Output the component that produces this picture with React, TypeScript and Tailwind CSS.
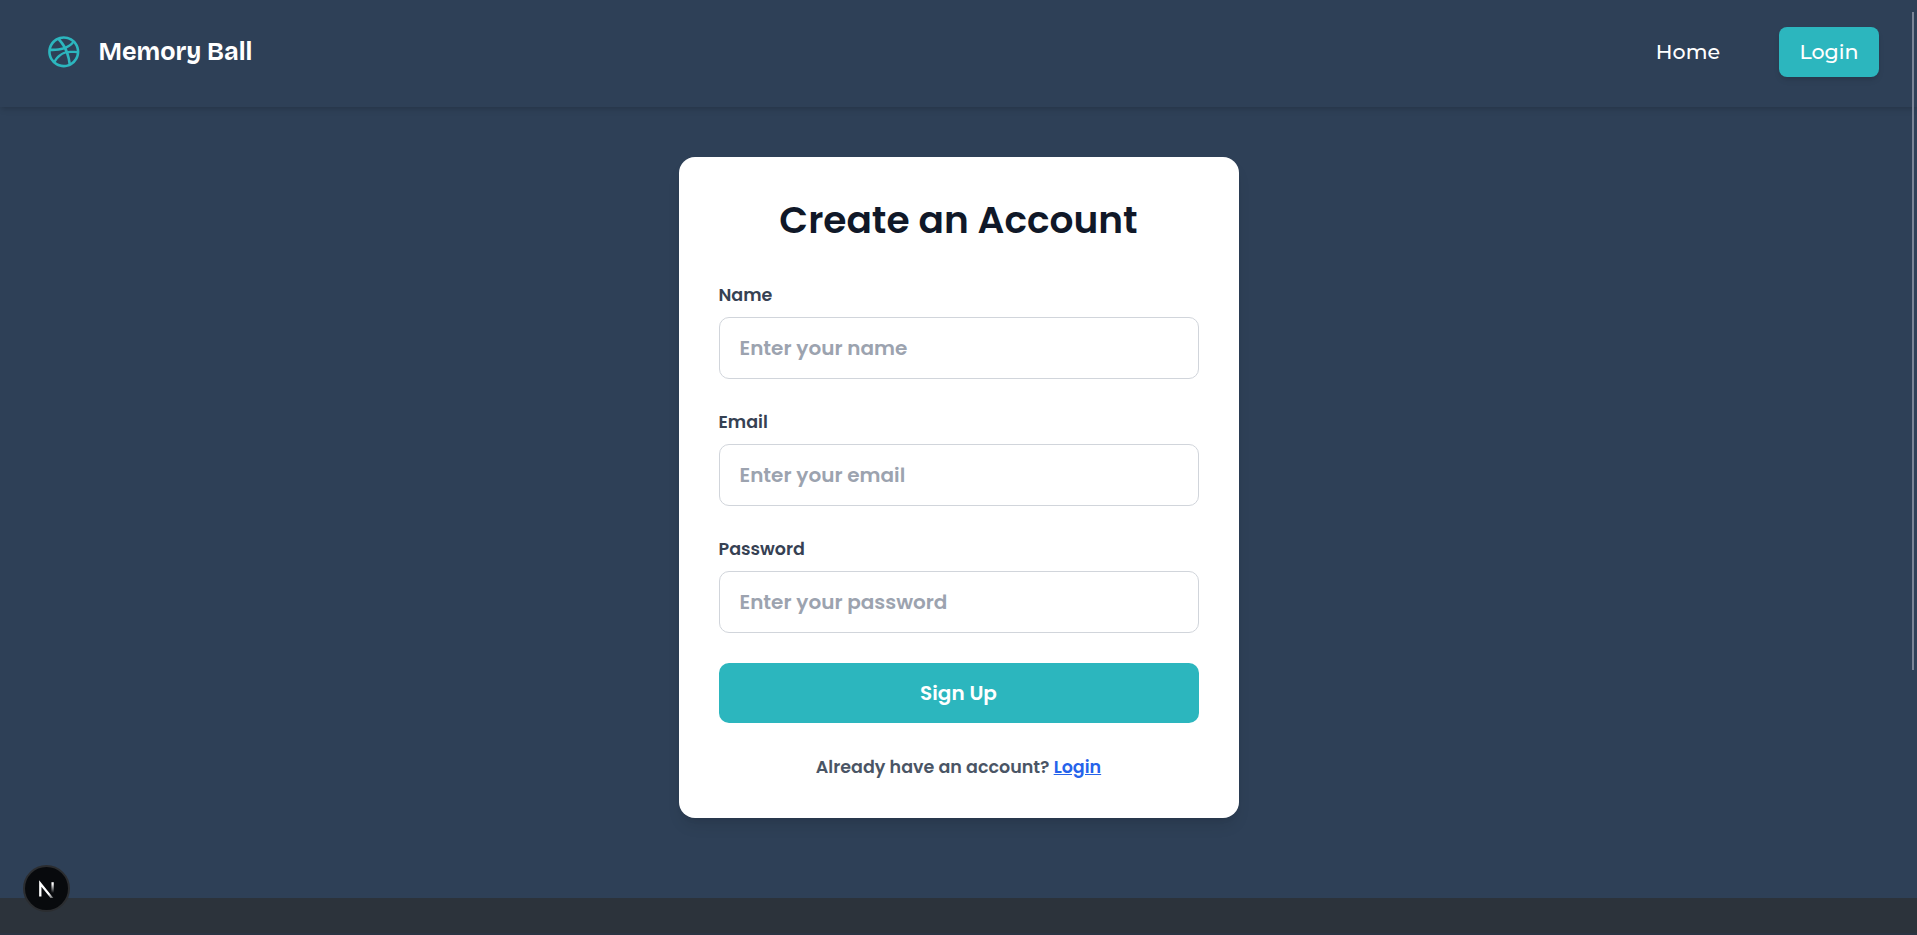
import { BiLogoDribbble } from "react-icons/bi";

type FieldProps = { id: string; label: string; type: string; placeholder: string };

function Navbar() {
  return (
    <header className="relative flex h-[107px] shrink-0 items-start justify-between pt-[27px] pr-[38px] pl-[45px] shadow-md">
      <div className="flex h-[50px] items-center gap-4">
        <BiLogoDribbble className="size-[37.5px] text-[#2cb6be]" />
        <span className="font-['Bricolage_Grotesque','Inter',sans-serif] text-[25px] leading-[35px] font-bold text-white">Memory Ball</span>
      </div>
      <nav className="flex items-center gap-[59px] font-['Montserrat','Inter',sans-serif] text-[20.6px] font-medium text-white">
        <a href="#home">Home</a>
        <a href="#login" className="flex h-[50px] w-[100px] items-center justify-center rounded-lg bg-[#2cb6be] shadow-md">Login</a>
      </nav>
    </header>
  );
}

function Field({ id, label, type, placeholder }: FieldProps) {
  return (
    <div className="flex h-[127px] flex-col">
      <label htmlFor={id} className="mb-2 h-[27px] text-[17.5px] leading-[27px] font-semibold text-gray-700">{label}</label>
      <input id={id} type={type} placeholder={placeholder} className="h-[62px] w-full rounded-[10px] border border-[#d1d5db] px-5 text-xl font-semibold outline-none placeholder:text-[#9ca3af]" />
    </div>
  );
}

function SignUpCard() {
  return (
    <form className="flex h-[661px] w-[560px] flex-col rounded-2xl bg-white px-10 pt-10 font-['Poppins','Inter',sans-serif] shadow-lg">
      <h1 className="mb-[45px] h-10 text-center text-[37.5px] leading-[46px] font-semibold text-gray-900">Create an Account</h1>
      <Field id="name" label="Name" type="text" placeholder="Enter your name" />
      <Field id="email" label="Email" type="email" placeholder="Enter your email" />
      <Field id="password" label="Password" type="password" placeholder="Enter your password" />
      <button type="button" className="h-[60px] w-full rounded-[10px] bg-[#2cb6be] text-xl font-semibold text-white">Sign Up</button>
      <p className="mt-[31px] text-center text-[17.5px] leading-[27px] font-semibold text-gray-600">
        Already have an account? <a href="#login" className="text-[#2563eb] underline">Login</a>
      </p>
    </form>
  );
}

function DevBadge() {
  return (
    <div className="absolute bottom-[23px] left-[23px] flex size-[47px] items-center justify-center rounded-full border-2 border-[#2b2d30] bg-[#080a0d]">
      <svg viewBox="0 0 18 18" className="size-[18px]" fill="none">
        <defs>
          <linearGradient id="stem" x1="0" y1="4" x2="0" y2="13" gradientUnits="userSpaceOnUse">
            <stop stopColor="white" />
            <stop offset="1" stopColor="white" stopOpacity="0" />
          </linearGradient>
          <linearGradient id="diagonal" x1="12" y1="13" x2="16" y2="18.5" gradientUnits="userSpaceOnUse">
            <stop stopColor="white" />
            <stop offset="1" stopColor="white" stopOpacity="0.2" />
          </linearGradient>
        </defs>
        <path d="M2.3 16.5V3.5L14.5 18.6" stroke="url(#diagonal)" strokeWidth="2.3" />
        <path d="M14.6 2.2V13" stroke="url(#stem)" strokeWidth="2.3" />
      </svg>
    </div>
  );
}

export default function App() {
  return (
    <div className="relative flex h-[935px] w-full flex-col overflow-hidden bg-[#2e4057]">
      <Navbar />
      <main className="flex h-[791px] shrink-0 items-start justify-center pt-[50px]">
        <SignUpCard />
      </main>
      <footer className="h-[37px] border-b-2 border-[#2b3442] bg-[#2c333b]" />
      <div className="absolute top-3 right-[3px] h-[658px] w-0.5 bg-[#7b8496]" />
      <DevBadge />
    </div>
  );
}
